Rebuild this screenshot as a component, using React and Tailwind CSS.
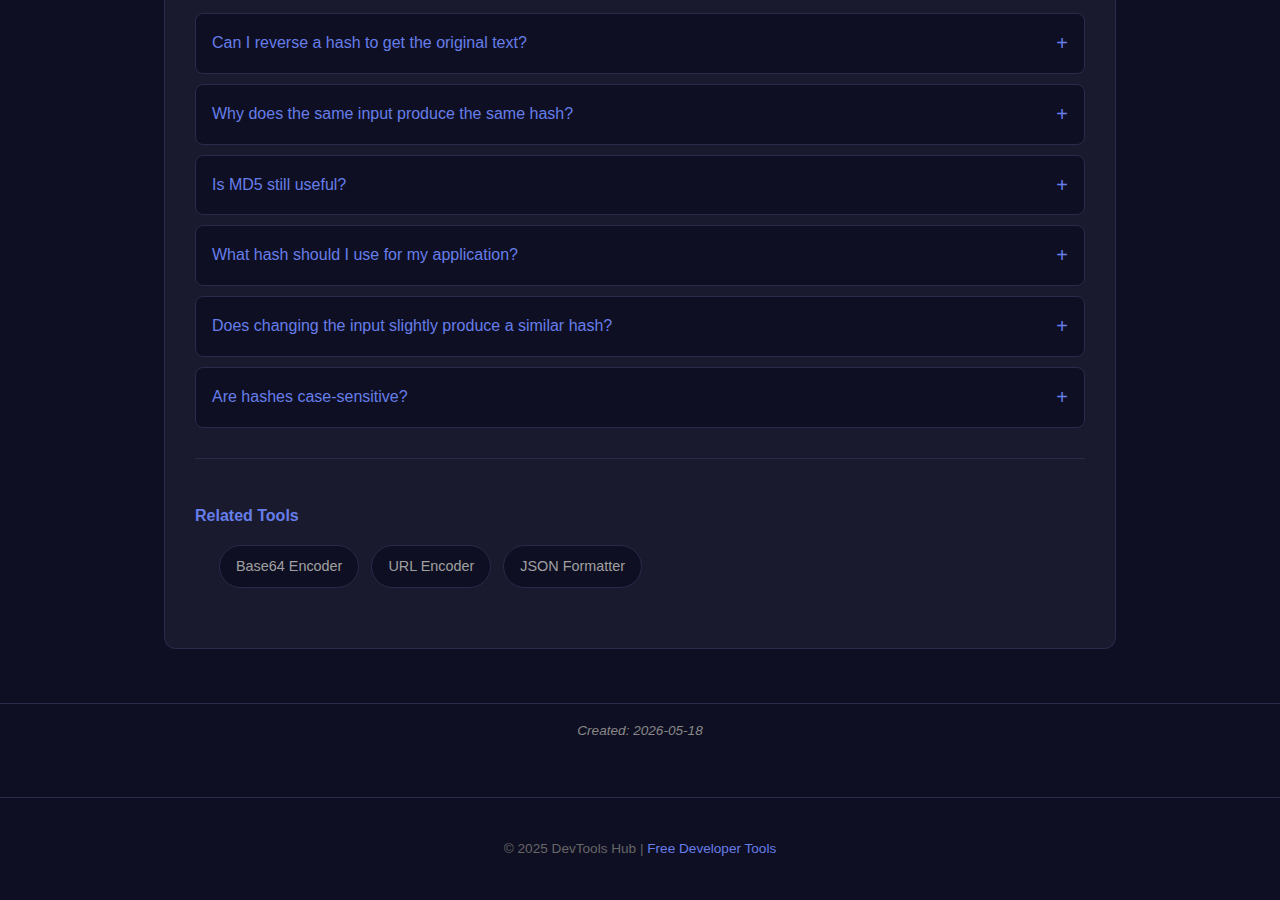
export default function App() {
  const faqs = [
    "Can I reverse a hash to get the original text?",
    "Why does the same input produce the same hash?",
    "Is MD5 still useful?",
    "What hash should I use for my application?",
    "Does changing the input slightly produce a similar hash?",
    "Are hashes case-sensitive?",
  ];
  const tools = ["Base64 Encoder", "URL Encoder", "JSON Formatter"];
  return (
    <div
      className="min-h-[900px] bg-[#0f0f23] text-[#e0e0e0]"
      style={{ fontFamily: '"Liberation Sans", Arial, sans-serif' }}
    >
      <div className="mx-auto w-[952px] rounded-b-xl border-x border-b border-[#2a2a4a] bg-[#1a1a2e] px-[30px] pt-[13px] pb-[60px]">
        <div className="flex flex-col gap-[10px]">
          {faqs.map((q) => (
            <div
              key={q}
              className="flex items-center justify-between rounded-lg border border-[#2a2a4a] bg-[#0f0f23] px-4 py-5"
            >
              <span className="text-base leading-[18.8px] text-[#667eea]">{q}</span>
              <span className="text-xl leading-[18.8px] text-[#667eea]">+</span>
            </div>
          ))}
        </div>
        <div className="mt-[30px] border-t border-[#2a2a4a]" />
        <h3 className="mt-[48px] text-base font-bold leading-[18px] text-[#667eea]">Related Tools</h3>
        <div className="mt-[20px] flex gap-3 pl-6">
          {tools.map((t) => (
            <span
              key={t}
              className="rounded-full border border-[#2a2a4a] bg-[#0f0f23] px-4 py-3 text-[14.4px] leading-[17px] text-[#a0a0a0]"
            >
              {t}
            </span>
          ))}
        </div>
      </div>
      <div className="mt-[54px] border-t border-[#2a2a4a] pt-[19px] pb-[58px] text-center">
        <p className="text-[13.6px] italic leading-[16px] text-[#888]">Created: 2026-05-18</p>
      </div>
      <div className="border-t border-[#2a2a4a] pt-[43px] text-center">
        <p className="text-[13.6px] leading-[16px] text-[#666]">
          © 2025 DevTools Hub | <span className="text-[#667eea]">Free Developer Tools</span>
        </p>
      </div>
    </div>
  );
}
